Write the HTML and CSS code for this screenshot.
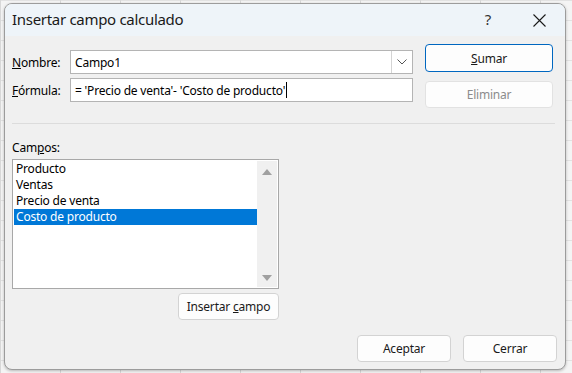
FILE: index.html
```html
<!DOCTYPE html>
<html lang="es">
<head>
<meta charset="utf-8">
<title>Insertar campo calculado</title>
<link rel="stylesheet" href="styles.css">
</head>
<body>
<div class="desk">
  <div class="dialog">
    <div class="titlebar">
      <span class="title">Insertar campo calculado</span>
      <span class="help">?</span>
      <span class="close">
        <svg width="13" height="13" viewBox="0 0 13 13"><path d="M0.5 0.5 L12.5 12.5 M12.5 0.5 L0.5 12.5" stroke="#1a1a1a" stroke-width="1.1" fill="none"/></svg>
      </span>
    </div>
    <div class="body">
      <div class="top">
        <div class="fields">
          <div class="row">
            <label class="label"><u>N</u>ombre:</label>
            <div class="input combo">
              <span class="value">Campo1</span>
              <span class="drop">
                <svg width="10" height="6" viewBox="0 0 10 6"><path d="M0.5 0.5 L5 5 L9.5 0.5" stroke="#555" stroke-width="1" fill="none"/></svg>
              </span>
            </div>
          </div>
          <div class="row">
            <label class="label"><u>F</u>órmula:</label>
            <div class="input">
              <span class="value">= 'Precio de venta'- 'Costo de producto'<span class="caret"></span></span>
            </div>
          </div>
        </div>
        <div class="side">
          <button class="btn primary"><u>S</u>umar</button>
          <button class="btn disabled">Eliminar</button>
        </div>
      </div>
      <div class="sep"></div>
      <div class="label campos">Cam<u>p</u>os:</div>
      <div class="listwrap">
        <div class="list">
          <div class="items">
            <div class="item">Producto</div>
            <div class="item">Ventas</div>
            <div class="item">Precio de venta</div>
            <div class="item selected">Costo de producto</div>
          </div>
          <div class="scroll">
            <svg width="10" height="6" viewBox="0 0 10 6"><path d="M0 6 L5 0 L10 6 Z" fill="#a0a0a0"/></svg>
            <svg width="10" height="6" viewBox="0 0 10 6"><path d="M0 0 L5 6 L10 0 Z" fill="#a0a0a0"/></svg>
          </div>
        </div>
        <button class="btn insert">Insertar <u>c</u>ampo</button>
      </div>
      <div class="footer">
        <button class="btn foot">Aceptar</button>
        <button class="btn foot">Cerrar</button>
      </div>
    </div>
  </div>
</div>
</body>
</html>
```

FILE: styles.css
```css
* { box-sizing: border-box; }
html, body { margin: 0; padding: 0; }
body {
  width: 572px;
  height: 373px;
  overflow: hidden;
  font-family: "Noto Sans", "Open Sans", sans-serif;
  font-size: 12px;
  letter-spacing: -0.2px;
  color: #000;
}
.desk {
  width: 572px;
  height: 373px;
  padding: 3px 6px 3px 4px;
  background-color: #f4f4f4;
  background-image:
    linear-gradient(to right, #d8d8d8 1px, transparent 1px),
    linear-gradient(to bottom, #e2e2e2 1px, transparent 1px);
  background-size: 60px 100%, 100% 20px;
}
.dialog {
  width: 562px;
  height: 367px;
  border: 1px solid #9c9c9c;
  border-radius: 8px;
  overflow: hidden;
  background: #f0f0f0;
  box-shadow: 0 1px 3px rgba(0,0,0,0.25);
  display: flex;
  flex-direction: column;
}
.titlebar {
  height: 32px;
  flex: none;
  background: #eef4f9;
  display: flex;
  align-items: center;
  padding-left: 7px;
}
.title {
  flex: 1;
  font-size: 15px;
  letter-spacing: -0.3px;
  color: #1a1a1a;
  padding-bottom: 2px;
}
.help {
  font-size: 15px;
  color: #333;
  width: 20px;
  text-align: center;
  margin-right: 35px;
  padding-bottom: 2px;
}
.close {
  width: 13px;
  height: 13px;
  display: flex;
  margin-right: 19px;
}
.body {
  flex: 1;
  display: flex;
  flex-direction: column;
  padding: 8px 8px 0 7px;
}
.top {
  display: flex;
  gap: 12px;
  margin-right: 4px;
}
.fields {
  flex: 1;
  display: flex;
  flex-direction: column;
  gap: 4px;
  margin-top: 6px;
}
.row {
  display: flex;
  align-items: center;
  height: 24px;
}
.label {
  width: 58px;
  flex: none;
}
.input {
  flex: 1;
  height: 24px;
  background: #fff;
  border: 1px solid #b4b4b4;
  display: flex;
  align-items: center;
  padding-left: 4px;
}
.value {
  flex: 1;
  display: flex;
  align-items: center;
  white-space: pre;
}
.caret {
  display: inline-block;
  width: 1px;
  height: 16px;
  background: #000;
  margin-left: 1px;
}
.drop {
  width: 21px;
  height: 22px;
  border-left: 1px solid #d4d4d4;
  display: flex;
  align-items: center;
  justify-content: center;
}
.side {
  width: 128px;
  display: flex;
  flex-direction: column;
  gap: 9px;
}
.btn {
  font-family: inherit;
  font-size: 12px;
  letter-spacing: -0.2px;
  color: #1a1a1a;
  background: #fdfdfd;
  border: 1px solid #d3d3d3;
  border-radius: 4px;
  height: 27px;
  padding: 0;
}
.btn.primary {
  height: 28px;
  border: 1px solid #0067c0;
}
.btn.disabled {
  color: #8c8c8c;
  border-color: #e2e2e2;
}
.sep {
  height: 1px;
  background: #dcdcdc;
  margin: 15px 2px 0 0;
}
.campos {
  width: auto;
  margin-top: 16px;
  line-height: 16px;
}
.listwrap {
  width: 267px;
  display: flex;
  flex-direction: column;
  align-items: flex-end;
  margin-top: 3px;
}
.list {
  width: 267px;
  height: 130px;
  background: #fff;
  border: 1px solid #a8a8a8;
  display: flex;
  padding: 1px;
}
.items {
  flex: 1;
  display: flex;
  flex-direction: column;
}
.item {
  height: 16px;
  line-height: 16px;
  padding-left: 2px;
}
.item.selected {
  background: #0078d7;
  color: #fff;
}
.scroll {
  width: 20px;
  background: #f0f0f0;
  display: flex;
  flex-direction: column;
  justify-content: space-between;
  align-items: center;
  padding: 8px 0 6px;
}
.btn.insert {
  width: 101px;
  margin-top: 4px;
}
.footer {
  display: flex;
  justify-content: flex-end;
  gap: 12px;
  margin-top: 15px;
}
.btn.foot {
  width: 94px;
}
```
